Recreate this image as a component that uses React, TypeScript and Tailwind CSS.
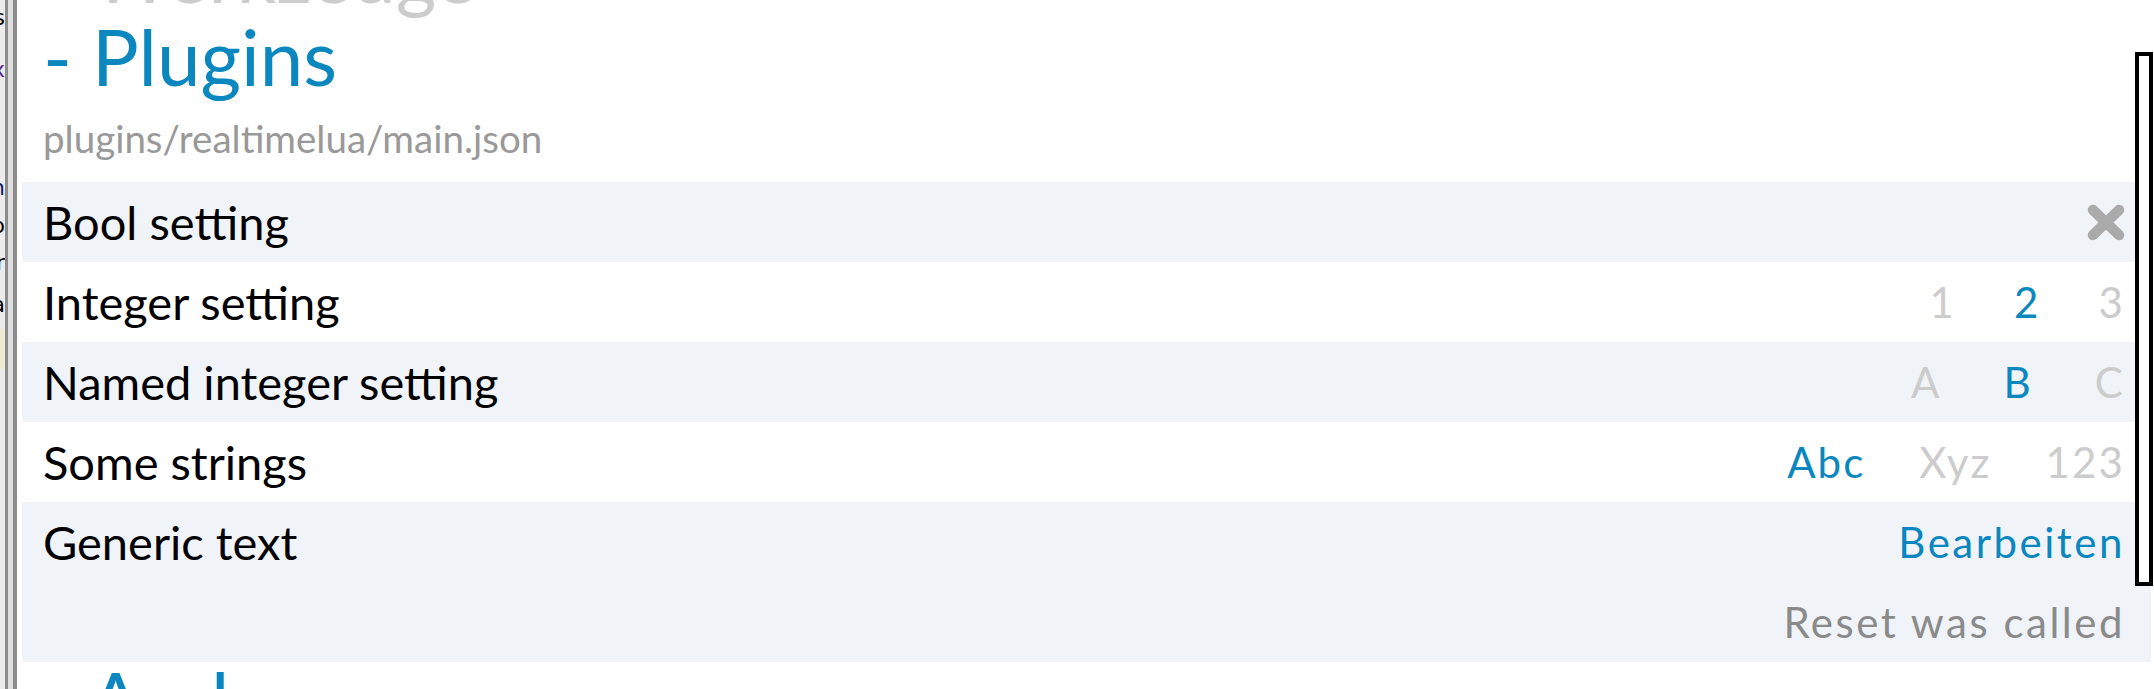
import React from 'react';

const BLUE = 'text-[#0a87bf]';

const leftLines = [
    { t: 'Tools', c: 'text-black', box: 'mt-[6px]' },
    { t: 'Index', c: 'text-[#5a1f8f]', box: 'mt-[28px]' },
    { t: 'Plugin', c: 'text-[#0b1a6e]', box: 'mt-[94px]' },
    { t: 'Loop', c: 'text-black', box: 'mt-[14px]' },
    { t: 'Tür', c: 'text-black', box: 'mt-[13px]' },
    { t: 'Data', c: 'text-black', box: 'mt-[18px]' },
];

function ClippedPanel() {
    return (
        <div className="flex h-full w-[5px] shrink-0 flex-col items-end overflow-hidden bg-[#ececec] font-['DejaVu_Sans',sans-serif] text-[22px] leading-[24px]">
            {leftLines.map((l) => (
                <div key={l.t} className={`${l.box} whitespace-nowrap ${l.c}`}>
                    {l.t}
                </div>
            ))}
            <div className="mt-[12px] h-[40px] w-full shrink-0 bg-[#f1ead6]" />
        </div>
    );
}

function CloseIcon() {
    return (
        <svg width="38" height="37" viewBox="0 0 38 37" className="block">
            <path d="M6 6 L32 31 M32 6 L6 31" stroke="#aaaaaa" strokeWidth="10.5" strokeLinecap="round" />
        </svg>
    );
}

function Options({ items, active, gap = 'gap-[60px]' }: { items: string[]; active: number; gap?: string }) {
    return (
        <div className={`flex items-center text-[42px] tracking-[0.05em] ${gap}`}>
            {items.map((it, i) => (
                <span key={it} className={i === active ? BLUE : 'text-[#cccccc]'}>
                    {it}
                </span>
            ))}
        </div>
    );
}

function Row({ label, shaded, children }: { label: string; shaded?: boolean; children: React.ReactNode }) {
    return (
        <div className={`flex h-[80px] items-center justify-between pl-[21px] pr-[26px] ${shaded ? 'bg-[#f0f4f9]' : ''}`}>
            <span className="text-[47px] text-black">{label}</span>
            {children}
        </div>
    );
}

export default function App() {
    return (
        <div className="relative flex h-[689px] w-full overflow-hidden bg-white font-['Lato',sans-serif]">
            <ClippedPanel />
            <div className="h-full w-[12px] shrink-0 border-l-[3px] border-r-[4px] border-[#8c8c8c] bg-[#dedede]" />

            <div className="min-w-0 flex-1 pl-[5px] pr-[3px]">
                <h2 className="-mt-[66px] pl-[21px] text-[78px] leading-[78px] text-[#cccccc]">- Werkzeuge</h2>
                <h2 className={`mt-[5px] pl-[21px] text-[78px] leading-[78px] ${BLUE}`}>- Plugins</h2>
                <div className="mt-[21px] pl-[21px] text-[38.5px] leading-[44px] text-[#999999]">plugins/realtimelua/main.json</div>

                <div className="mt-[22px] leading-[80px]">
                    <Row label="Bool setting" shaded>
                        <CloseIcon />
                    </Row>
                    <Row label="Integer setting">
                        <Options items={['1', '2', '3']} active={1} gap="gap-[58px]" />
                    </Row>
                    <Row label="Named integer setting" shaded>
                        <Options items={['A', 'B', 'C']} active={1} gap="gap-[62px]" />
                    </Row>
                    <Row label="Some strings">
                        <Options items={['Abc', 'Xyz', '123']} active={0} gap="gap-[54px]" />
                    </Row>
                    <div className="flex h-[160px] justify-between bg-[#f0f4f9] pl-[21px] pr-[26px]">
                        <span className="text-[47px] text-black">Generic text</span>
                        <div className="flex flex-col items-end text-[42px] tracking-[0.06em]">
                            <span className={BLUE}>Bearbeiten</span>
                            <span className="text-[#8a8a8a]">Reset was called</span>
                        </div>
                    </div>
                </div>

                <h2 className={`-mt-[2px] pl-[21px] text-[78px] leading-[78px] ${BLUE}`}>- Andere</h2>
            </div>

            <div className="absolute right-[1px] top-[52px] h-[534px] w-[18px] border-[4px] border-black bg-white" />
        </div>
    );
}
